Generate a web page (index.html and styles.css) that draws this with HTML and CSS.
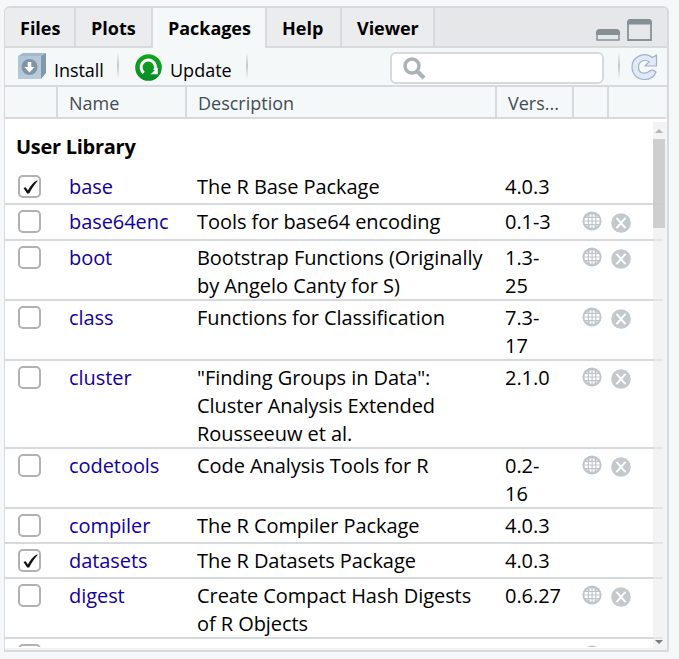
FILE: index.html
```html
<!DOCTYPE html>
<html lang="en">
<head>
<meta charset="utf-8">
<title>Packages</title>
<link rel="stylesheet" href="styles.css">
</head>
<body>
<svg class="defs" aria-hidden="true">
  <symbol id="globe" viewBox="0 0 20 20"><circle cx="10" cy="10" r="9.6" fill="#bfc6c9"/><g fill="none" stroke="#fff" stroke-width="1"><path d="M3.500 6.300h13M2.500 10h15M3.500 13.700h13" stroke="none"/></g><g fill="#fff"><path d="M8 3.500h1.500v2.200H7.200zM10.700 3.500h1.500l.8 2.200h-2.300zM4.300 5.700l1.800-1.500-.4 1.500zM15.900 5.700l-1.800-1.500.4 1.500zM3 7h2.800v2.400H2.400zM7 7h2.500v2.400H7zM10.700 7h2.500v2.400h-2.500zM14.400 7h2.800l.5 2.400h-3.300zM2.400 10.600h3.400V13H3zM7 10.600h2.500V13H7zM10.700 10.600h2.500V13h-2.500zM14.400 10.600h3.300l-.6 2.400h-2.700zM4.300 14.300h1.400l.6 1.600zM7.200 14.300h2.300v2.500H8.200zM10.700 14.300H13l-.9 2.500h-1.400zM15.900 14.300h-1.400l-.6 1.600z"/></g></symbol>
  <symbol id="remove" viewBox="0 0 20 20"><circle cx="10" cy="10" r="9.8" fill="#c3c9cc"/><path d="M5.500 4.800l9 10.400M14.500 4.800l-9 10.400" stroke="#fff" stroke-width="2"/></symbol>
  <symbol id="check" viewBox="0 0 23 23"><path d="M5.500 13l2.200-.8 2.200 3.400C12 11.500 15 7.500 18.800 5.500l1 .3C16.500 9.500 13.500 14 11.200 18.500H9.200z" fill="#111"/></symbol>
</svg>
<main class="pane">
  <nav class="tabs">
    <div class="tab files"><span>Files</span></div>
    <div class="tab plots"><span>Plots</span></div>
    <div class="tab packages active"><span>Packages</span></div>
    <div class="tab help"><span>Help</span></div>
    <div class="tab viewer"><span>Viewer</span></div>
    <div class="window-buttons">
      <svg width="24" height="12" viewBox="0 0 24 12"><path d="M1 11V4q0-3 3-3h16q3 0 3 3v7z" fill="#e5e7e8" stroke="#87929a" stroke-width="1.500"/><path d="M0 6V4q0-4 4-4h16q4 0 4 4v2z" fill="#849095"/></svg>
      <svg width="25" height="22" viewBox="0 0 25 22"><path d="M1 21V4q0-3 3-3h17q3 0 3 3v17z" fill="#e5e7e8" stroke="#87929a" stroke-width="1.800"/><path d="M0 5.500V4q0-4 4-4h17q4 0 4 4v1.500z" fill="#849095"/></svg>
    </div>
  </nav>
  <div class="toolbar">
    <svg class="install-icon" width="30" height="28" viewBox="0 0 30 28"><defs><linearGradient id="box" x2="1" y2="1"><stop stop-color="#aec3d7"/><stop offset="1" stop-color="#bccbdb"/></linearGradient></defs><path d="M1 4l5-3h23l-5 3z" fill="#a3b8ca"/><path d="M24 4l5-3v20l-5 6z" fill="#8298ad"/><path d="M1 4h23v23H1z" fill="url(#box)"/><circle cx="12.500" cy="15" r="8" fill="#8295a6"/><path d="M10.700 10h3.600v5h3.200l-5 5.500-5-5.500h3.200z" fill="#fff"/></svg>
    <span class="label install">Install</span>
    <i class="divider"></i>
    <svg class="update-icon" width="27" height="27" viewBox="0 0 27 27"><defs><linearGradient id="green" x2="0" y2="1"><stop stop-color="#12a51b"/><stop offset="1" stop-color="#078d29"/></linearGradient></defs><circle cx="13.500" cy="13.500" r="13.300" fill="url(#green)"/><path d="M8.800 18.900A7.200 7.200 0 1 1 19.700 16.500" fill="none" stroke="#fff" stroke-width="3"/><path d="M15.500 20.300h7.300v-6.800z" fill="#fff"/></svg>
    <span class="label update">Update</span>
    <i class="divider"></i>
    <div class="search"><svg width="23" height="23" viewBox="0 0 23 23"><circle cx="9" cy="9" r="7" fill="none" stroke="#aab3b7" stroke-width="3.400"/><path d="M14 14l7 7" stroke="#aab3b7" stroke-width="4.200"/></svg></div>
    <i class="divider d3"></i>
    <svg class="refresh" width="27" height="28" viewBox="0 0 27 28"><path d="M25.500 2v11H14l4-4.200C14 5.500 7.500 8 7.500 14.500c0 6 7 7.500 11.500 3.200q3-1.500 6 1.300C23 24 18.500 26.500 13.500 26.500 6 26.500 1 21 1 14 1 3 14-1.500 21.500 4.500z" fill="#dfe9f7" stroke="#a3afc5" stroke-width="1.200" stroke-linejoin="round"/></svg>
  </div>
  <div class="grid header">
    <div></div><div>Name</div><div>Description</div><div>Vers...</div><div></div><div></div>
  </div>
  <div class="list">
    <div class="rows">
      <h2>User Library</h2>
      <div class="grid row"><b class="box"><svg><use href="#check"/></svg></b><a>base</a><p>The R Base Package</p><p>4.0.3</p></div>
      <div class="grid row tall"><b class="box"></b><a>base64enc</a><p>Tools for base64 encoding</p><p>0.1-3</p><svg class="globe"><use href="#globe"/></svg><svg class="remove"><use href="#remove"/></svg></div>
      <div class="grid row"><b class="box"></b><a>boot</a><p>Bootstrap Functions (Originally<br>by Angelo Canty for S)</p><p>1.3-<br>25</p><svg class="globe"><use href="#globe"/></svg><svg class="remove"><use href="#remove"/></svg></div>
      <div class="grid row"><b class="box"></b><a>class</a><p>Functions for Classification</p><p>7.3-<br>17</p><svg class="globe"><use href="#globe"/></svg><svg class="remove"><use href="#remove"/></svg></div>
      <div class="grid row"><b class="box"></b><a>cluster</a><p>"Finding Groups in Data":<br>Cluster Analysis Extended<br>Rousseeuw et al.</p><p>2.1.0</p><svg class="globe"><use href="#globe"/></svg><svg class="remove"><use href="#remove"/></svg></div>
      <div class="grid row"><b class="box"></b><a>codetools</a><p>Code Analysis Tools for R</p><p>0.2-<br>16</p><svg class="globe"><use href="#globe"/></svg><svg class="remove"><use href="#remove"/></svg></div>
      <div class="grid row"><b class="box"></b><a>compiler</a><p>The R Compiler Package</p><p>4.0.3</p></div>
      <div class="grid row"><b class="box"><svg><use href="#check"/></svg></b><a>datasets</a><p>The R Datasets Package</p><p>4.0.3</p></div>
      <div class="grid row"><b class="box"></b><a>digest</a><p>Create Compact Hash Digests<br>of R Objects</p><p>0.6.27</p><svg class="globe"><use href="#globe"/></svg><svg class="remove"><use href="#remove"/></svg></div>
      <div class="grid row"><b class="box"></b><a></a><p></p><p></p><svg class="globe"><use href="#globe"/></svg></div>
    </div>
    <div class="scrollbar"><i class="up"></i><i class="thumb"></i><i class="down"></i></div>
  </div>
</main>
</body>
</html>
```
FILE: styles.css
```css
* { box-sizing: border-box; }
body { margin: 0; padding: 6px 0 0 4px; height: 659px; overflow: hidden; background: #f5f7f9; color: #000; font: 20px/28px "Open Sans", "Noto Sans", sans-serif; }
.defs { position: absolute; width: 0; height: 0; }
.pane { width: 665px; height: 646px; border: 2px solid #d6dadc; border-left-width: 1px; border-radius: 6px 6px 0 0; background: #f0f2f3; overflow: hidden; display: flex; flex-direction: column; }
.tabs { display: flex; height: 40px; background: #e5e7e8; flex: none; }
.tab { height: 40px; padding: 6px 0 0 15px; border-right: 2px solid #d6dadc; border-bottom: 2px solid #d6dadc; background: #ebeced; font-size: 18px; font-weight: 700; line-height: 28px; white-space: nowrap; }
.files { width: 71px; }
.plots { width: 77px; }
.packages { width: 114px; letter-spacing: -0.05px; }
.help { width: 75px; }
.viewer { width: 93px; letter-spacing: -0.05px; }
.active { background: #f4f8f9; border-bottom: 0; }
.window-buttons { flex: 1; border-bottom: 2px solid #d6dadc; display: flex; justify-content: flex-end; align-items: flex-end; gap: 7px; padding: 0 15px 5px 0; }
.toolbar { height: 39px; flex: none; border-bottom: 2px solid #d6dadc; background: #f4f8f9; display: flex; align-items: flex-start; }
.install-icon { margin: 4px 0 0 12px; flex: none; }
.label { font-size: 18px; line-height: 28px; margin-top: 8px; white-space: nowrap; }
.install { width: 63px; margin-left: 7px; letter-spacing: -0.05px; }
.divider { width: 2px; height: 27px; margin-top: 4px; background: linear-gradient(#f4f8f9, #c4c9cb 50%, #f4f8f9); flex: none; }
.update-icon { margin: 6px 0 0 16px; flex: none; }
.update { margin-left: 8px; width: 76px; }
.search { width: 214px; height: 32px; margin: 4px 0 0 142px; border: 2px solid #d6dadc; border-radius: 6px; background: #fff; padding: 3px 0 0 11px; flex: none; }
.search svg { display: block; }
.d3 { margin-left: 14px; }
.refresh { margin: 5px 0 0 11px; flex: none; }
.grid { display: grid; grid-template-columns: 53px 129px 310px 77px 35px 1fr; }
.header { height: 32px; width: 661px; flex: none; border-bottom: 2px solid #d6dadc; background: #f4f8f9; font-size: 18px; line-height: 30px; color: #444c54; }
.header div { height: 30px; padding: 1px 0 0 11px; border-right: 2px solid #d6dadc; white-space: nowrap; }
.header div:last-child { border: 0; }
.list { position: relative; height: 529px; background: #fff; overflow: hidden; flex: none; }
.rows { width: 658px; height: 528px; overflow: hidden; letter-spacing: -0.06px; }
h2 { margin: 0; height: 51px; padding: 14px 0 0 11px; font-size: 20px; line-height: 28px; letter-spacing: -0.28px; }
.row { min-height: 35px; padding-top: 2px; border-bottom: 2px solid #d6dadc; align-items: start; }
.tall { min-height: 36px; }
.row a { color: #1200a0; padding: 1px 0 0 11px; margin-bottom: -1px; }
.row p { margin: 0 0 -1px; padding: 1px 0 0 10px; white-space: nowrap; }
.row p + p { padding-left: 8px; }
.box { display: block; width: 23px; height: 23px; margin: 3px 0 0 13px; border: 2px solid #b1b1b1; border-radius: 5px; }
.box svg { display: block; width: 23px; height: 23px; margin: -2px; }
.globe { width: 20px; height: 20px; margin: 4px 0 0 8px; }
.remove { width: 20px; height: 20px; margin: 6px 0 0 2px; }
.scrollbar { position: absolute; top: 3px; right: 0; width: 14px; height: 526px; background: rgba(235,235,235,.6); }
.scrollbar i { position: absolute; }
.up { left: 2px; top: 7px; border: 4px solid transparent; border-top: 0; border-bottom-color: #b5b5b5; }
.thumb { left: 0; top: 17px; width: 12px; height: 89px; background: rgba(193,193,193,.75); }
.down { left: 2px; bottom: 4px; border: 4px solid transparent; border-bottom: 0; border-top-color: #7b7b7b; }
```
